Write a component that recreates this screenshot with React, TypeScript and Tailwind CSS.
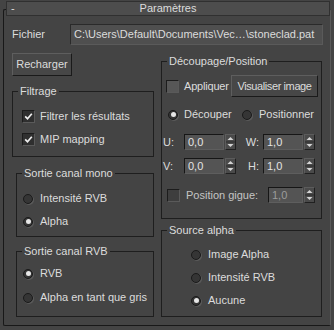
const Check = ({ checked, dim }: { checked?: boolean; dim?: boolean }) => (
  <span
    className={`w-[13px] h-[13px] shrink-0 flex items-center justify-center border border-t-[#1c1c1c] border-l-[#1c1c1c] border-b-[#5a5a5a] border-r-[#5a5a5a] ${
      checked ? "bg-[#2f2f2f]" : dim ? "bg-[#3e3e3e]" : "bg-[#575757]"
    }`}
  >
    {checked && (
      <svg width="9" height="9" viewBox="0 0 9 9">
        <path d="M1.2 4.3 L3.5 6.8 L7.8 1.8" fill="none" stroke="#f0f0f0" strokeWidth="1.7" />
      </svg>
    )}
  </span>
);

const Radio = ({ on }: { on?: boolean }) => (
  <span className="w-[10px] h-[10px] shrink-0 rounded-full flex items-center justify-center bg-[#353535] border border-[#1a1a1a] shadow-[1px_1px_0_#5a5a5a]">
    {on && <span className="w-[5px] h-[5px] rounded-full bg-[#e6e6e6]" />}
  </span>
);

const Spin = () => (
  <span className="ml-[1px] w-[11px] h-[16px] shrink-0 flex items-center justify-center bg-[#4a4a4a] border border-t-[#5c5c5c] border-l-[#5c5c5c] border-b-[#202020] border-r-[#202020]">
    <svg width="9" height="14" viewBox="0 0 9 14">
      <polygon points="1.5,5 4.5,2 7.5,5" fill="#d4d4d4" />
      <line x1="0" y1="7" x2="9" y2="7" stroke="#2a2a2a" strokeWidth="1" />
      <polygon points="1.5,9 4.5,12 7.5,9" fill="#d4d4d4" />
    </svg>
  </span>
);

const Field = ({ v, w, dim }: { v: string; w: string; dim?: boolean }) => (
  <span
    className={`${w} h-[16px] shrink-0 flex items-center pl-[3px] bg-[#545454] border border-t-[#161616] border-l-[#161616] border-b-[#5e5e5e] border-r-[#5e5e5e] ${
      dim ? "text-[#9c9c9c]" : "text-[#e4e4e4]"
    }`}
  >
    {v}
  </span>
);

const Group = ({
  title,
  className,
  children,
}: {
  title: string;
  className: string;
  children?: React.ReactNode;
}) => (
  <div className={`relative border border-[#1e1e1e] ${className}`}>
    <span className="absolute -top-[7px] left-[5px] px-[2px] bg-[#444444] leading-[13px]">{title}</span>
    {children}
  </div>
);

export default function App() {
  return (
    <div className="w-[334px] h-[330px] overflow-hidden bg-[#444444] pt-px text-[11px] leading-[13px] text-[#dcdcdc] font-['Liberation_Sans',Arial,sans-serif]">
      {/* rollout header */}
      <div className="relative z-10 ml-[6px] w-[324px] h-[15px] flex items-center bg-[#4d4d4d] border border-[#303030]">
        <span className="w-[14px] pl-[4px]">-</span>
        <span className="flex-1 text-center pr-[14px]">Paramètres</span>
      </div>

      {/* rollout frame */}
      <div className="-mt-[7px] ml-[3px] w-[328px] h-[317px] border border-[#181818] border-r-[#5a5a5a] rounded-[2px]">
        <div className="mt-[14px] pl-[8px] flex items-center">
          <span className="w-[58px]">Fichier</span>
          <span className="w-[253px] h-[21px] flex items-center pl-[3px] bg-[#4f4f4f] border border-t-[#2a2a2a] border-l-[#2a2a2a] border-b-[#5a5a5a] border-r-[#5a5a5a] whitespace-nowrap overflow-hidden">
            C:\Users\Default\Documents\Vec…\stoneclad.pat
          </span>
        </div>

        <div className="mt-[8px] pl-[8px] flex">
          {/* left column */}
          <div className="w-[142px] flex flex-col">
            <button className="w-[60px] h-[23px] flex items-center justify-center bg-[#474747] border border-t-[#5e5e5e] border-l-[#5e5e5e] border-b-[#1a1a1a] border-r-[#1a1a1a]">
              Recharger
            </button>

            <Group title="Filtrage" className="mt-[15px] w-[142px] h-[66px] pt-[18px] pl-[9px] flex flex-col gap-[10px]">
              <div className="flex items-center gap-[5px]">
                <Check checked />
                <span>Filtrer les résultats</span>
              </div>
              <div className="flex items-center gap-[5px]">
                <Check checked />
                <span>MIP mapping</span>
              </div>
            </Group>

            <Group title="Sortie canal mono" className="mt-[16px] ml-[4px] w-[138px] h-[64px] pt-[18px] pl-[6px] flex flex-col gap-[10px]">
              <div className="flex items-center gap-[7px]">
                <Radio />
                <span>Intensité RVB</span>
              </div>
              <div className="flex items-center gap-[7px]">
                <Radio on />
                <span>Alpha</span>
              </div>
            </Group>

            <Group title="Sortie canal RVB" className="mt-[14px] ml-[4px] w-[138px] h-[66px] pt-[15px] pl-[6px] flex flex-col gap-[11px]">
              <div className="flex items-center gap-[7px]">
                <Radio on />
                <span>RVB</span>
              </div>
              <div className="flex items-center gap-[7px]">
                <Radio />
                <span>Alpha en tant que gris</span>
              </div>
            </Group>
          </div>

          {/* right column */}
          <div className="ml-[7px] w-[161px] flex flex-col">
            <Group title="Découpage/Position" className="mt-[8px] w-[161px] h-[158px] pt-[13px] flex flex-col">
              <div className="flex items-center pl-[4px] pr-[3px] h-[22px]">
                <Check />
                <span className="ml-[5px] tracking-[-0.2px]">Appliquer</span>
                <button className="ml-auto w-[87px] h-[22px] flex items-center justify-center tracking-[-0.4px] bg-[#474747] border border-t-[#5e5e5e] border-l-[#5e5e5e] border-b-[#1a1a1a] border-r-[#1a1a1a]">
                  Visualiser image
                </button>
              </div>

              <div className="mt-[11px] flex items-center pl-[6px]">
                <div className="w-[74px] flex items-center gap-[6px]">
                  <Radio on />
                  <span>Découper</span>
                </div>
                <div className="flex items-center gap-[7px]">
                  <Radio />
                  <span>Positionner</span>
                </div>
              </div>

              <div className="mt-[13px] flex items-center pl-[1px]">
                <span className="w-[21px]">U:</span>
                <Field v="0,0" w="w-[40px]" />
                <Spin />
                <span className="w-[27px] text-right pr-[4px]">W:</span>
                <Field v="1,0" w="w-[40px]" />
                <Spin />
              </div>

              <div className="mt-[8px] flex items-center pl-[1px]">
                <span className="w-[21px]">V:</span>
                <Field v="0,0" w="w-[40px]" />
                <Spin />
                <span className="w-[27px] text-right pr-[4px]">H:</span>
                <Field v="1,0" w="w-[40px]" />
                <Spin />
              </div>

              <div className="mt-[13px] flex items-center pl-[5px] pr-[6px]">
                <Check dim />
                <span className="ml-[6px] text-[#c4c4c4]">Position gigue:</span>
                <span className="ml-auto flex items-center">
                  <Field v="1,0" w="w-[35px]" dim />
                  <Spin />
                </span>
              </div>
            </Group>

            <Group title="Source alpha" className="mt-[11px] w-[161px] h-[87px] pt-[17px] pl-[29px] flex flex-col gap-[10px]">
              <div className="flex items-center gap-[7px]">
                <Radio />
                <span>Image Alpha</span>
              </div>
              <div className="flex items-center gap-[7px]">
                <Radio />
                <span>Intensité RVB</span>
              </div>
              <div className="flex items-center gap-[7px]">
                <Radio on />
                <span>Aucune</span>
              </div>
            </Group>
          </div>
        </div>
      </div>
    </div>
  );
}
